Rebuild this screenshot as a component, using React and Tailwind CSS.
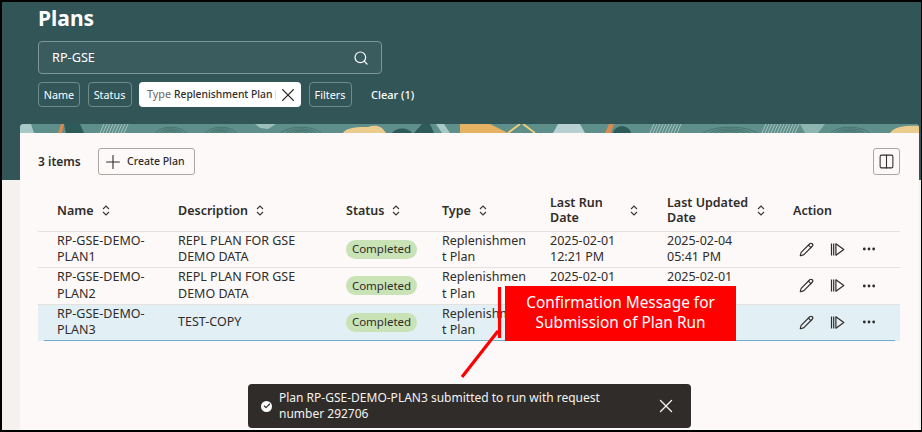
import { Search, X, Plus, Columns2, Pencil, Ellipsis, Check } from 'lucide-react';

const plans = [
  { name: ['RP-GSE-DEMO-', 'PLAN1'], desc: ['REPL PLAN FOR GSE', 'DEMO DATA'], run: ['2025-02-01', '12:21 PM'], updated: ['2025-02-04', '05:41 PM'] },
  { name: ['RP-GSE-DEMO-', 'PLAN2'], desc: ['REPL PLAN FOR GSE', 'DEMO DATA'], run: ['2025-02-01', '12:21 PM'], updated: ['2025-02-01', '12:21 PM'] },
  { name: ['RP-GSE-DEMO-', 'PLAN3'], desc: ['TEST-COPY'], run: ['2025-02-01', '12:21 PM'], updated: ['2025-02-01', '12:21 PM'], selected: true },
];

function SortIcon() {
  return (
    <svg width="8" height="11" viewBox="0 0 8 11" fill="none" stroke="#3a3632" strokeWidth="1.1" className="shrink-0">
      <path d="M1 4 4 1l3 3M1 7l3 3 3-3" />
    </svg>
  );
}

function RunIcon() {
  return (
    <svg width="15" height="15" viewBox="0 0 15 15" fill="none" stroke="#2f2c2a" strokeWidth="1.2">
      <path d="M1.5 1.5v12M3.7 1.5v12M5.9 1.5v12" />
      <path d="M5.9 1.7 13.8 7.5 5.9 13.3" strokeLinejoin="round" />
    </svg>
  );
}

function Arcs({ x, w }) {
  const cx = x + w / 2;
  return (
    <g fill="none" stroke="#2f5553" strokeWidth="0.6" opacity="0.8">
      <path d={`M${cx - w / 2} 10C${cx - w / 3} 1 ${cx + w / 3} 1 ${cx + w / 2} 10`} />
      <path d={`M${cx - w / 2.6} 10C${cx - w / 4} 3 ${cx + w / 4} 3 ${cx + w / 2.6} 10`} />
      <path d={`M${cx - w / 3.4} 10C${cx - w / 5} 5 ${cx + w / 5} 5 ${cx + w / 3.4} 10`} />
      <path d={`M${cx - w / 5} 10C${cx - w / 8} 7 ${cx + w / 8} 7 ${cx + w / 5} 10`} />
    </g>
  );
}

function Hatch({ x, w }) {
  const marks = [];
  for (let i = 0; i < w; i += 3) marks.push(`M${x + i} 9 ${x + i + 4} 0`);
  return <path d={marks.join('')} stroke="#cfe0dc" strokeWidth="0.8" fill="none" opacity="0.8" />;
}

function Banner() {
  return (
    <svg className="block w-full h-[9px]" viewBox="0 0 899 9" preserveAspectRatio="none">
      <rect width="899" height="9" fill="#5f8f8a" />
      <path d="M0 9 0 0H11L14 9Z" fill="#a9c9c6" />
      <path d="M38 9 41 0H44L42 9Z" fill="#d98b4f" />
      <path d="M44 0H60L64 9H46Z" fill="#2f5a5a" />
      <Hatch x={80} w={26} />
      <Arcs x={135} w={32} />
      <Arcs x={185} w={32} />
      <path d="M235 0H256L248 5 240 4Z" fill="#9dbfbb" />
      <Arcs x={260} w={42} />
      <path d="M323 9C326 3 340 3 348 3 356 0 362 2 366 9Z" fill="#eccb8f" />
      <path d="M372 9C376 3 388 3 392 9ZM394 9 402 0H410L414 9Z" fill="#2f5a5a" />
      <path d="M416 0H424L430 9H422Z" fill="#a9c9c6" />
      <path d="M440 0H470L488 9H440Z" fill="#e4b262" />
      <path d="M488 9 500 0M503 0 515 9" stroke="#f2cf7a" strokeWidth="1.8" fill="none" />
      <path d="M533 9 538 0H560L565 9Z" fill="#b9d0d2" />
      <path d="M585 9 589 0H594L591 9Z" fill="#d98b4f" />
      <path d="M593 9C595 0 609 0 611 9Z" fill="#2f5a5a" />
      <Hatch x={630} w={28} />
      <Arcs x={682} w={56} />
      <Hatch x={742} w={36} />
      <path d="M780 0H805L798 9H785Z" fill="#8fb5b0" />
      <Arcs x={810} w={40} />
      <path d="M870 9C874 3 884 1 899 2V9Z" fill="#eccb8f" />
    </svg>
  );
}

function Th({ children, first }) {
  return (
    <th className={`font-semibold text-left align-middle leading-[15px] ${first ? 'pl-[19px]' : ''}`}>
      <div className="flex items-center gap-[8px]">
        <span>{children}</span>
        <SortIcon />
      </div>
    </th>
  );
}

function Lines({ items }) {
  return items.map((line) => <div key={line}>{line}</div>);
}

function Chip({ children, width }) {
  return (
    <span className={`${width} h-full pt-[1px] flex items-center justify-center rounded-[4px] border border-[#6f8c8d]`}>{children}</span>
  );
}

export default function App() {
  return (
    <div className="relative w-[922px] h-[432px] overflow-hidden border-t-2 border-l-2 border-b-2 border-r border-black bg-[#f4f1ee] font-['Noto_Sans',sans-serif] text-[#2f2c2a] text-[12.5px]">
      <div className="h-[178px] bg-[#325558] pl-[36px]">
        <h1 className="text-[21px] font-bold text-white leading-[32px]">Plans</h1>
        <div className="mt-[7px] flex items-center justify-between w-[344px] h-[33px] px-[13px] rounded-[4px] border border-[#7d9797] bg-[#3a5c5f] text-white text-[12.7px]">
          <span>RP-GSE</span>
          <Search size={16} strokeWidth={1.8} className="mr-[-1px]" />
        </div>
        <div className="mt-[8px] flex items-center gap-[7.5px] h-[25px] text-[10.8px] text-white">
          <Chip width="w-[42px]">Name</Chip>
          <Chip width="w-[44px]">Status</Chip>
          <span className="w-[162px] h-full pl-[8px] flex items-center rounded-[4px] bg-white text-[#2f2c2a] whitespace-nowrap">
            <span className="text-[#6b6662] mr-[3px]">Type</span>
            <span className="font-medium text-[10.3px]">Replenishment Plan</span>
            <span className="ml-auto w-px h-[10px] bg-[#e5e1dd]" />
            <X size={22} strokeWidth={1.2} className="ml-[1px] mr-[2px]" />
          </span>
          <Chip width="w-[43px]">Filters</Chip>
          <span className="ml-[12px] pt-[1px] font-medium text-[11px]">Clear (1)</span>
        </div>
      </div>

      <div className="ml-[18px] mr-[2px] -mt-[56px] h-[310px] rounded-t-[4px] overflow-hidden bg-[#fcf9f8]">
        <Banner />
        <div className="flex items-center h-[27px] mt-[15px] pl-[18px] pr-[19px]">
          <span className="w-[42px] whitespace-nowrap font-semibold text-[12px]">3 items</span>
          <button className="ml-[18px] flex items-center w-[97px] h-full pl-[3px] rounded-[3px] border border-[#aaa6a2] text-[10.5px] font-medium">
            <Plus size={22} strokeWidth={1.2} className="mr-[3px]" />
            Create Plan
          </button>
          <button className="ml-auto flex items-center justify-center w-[27px] h-full rounded-[3px] border border-[#aaa6a2]">
            <Columns2 size={17} strokeWidth={1.5} />
          </button>
        </div>
        <table className="mt-[15px] ml-[18px] w-[862px] table-fixed border-collapse">
          <colgroup>
            <col className="w-[140px]" />
            <col className="w-[168px]" />
            <col className="w-[96px]" />
            <col className="w-[108px]" />
            <col className="w-[117px]" />
            <col className="w-[126px]" />
            <col className="w-[107px]" />
          </colgroup>
          <thead>
            <tr className="h-[41px] border-b border-[#e5e1dd]">
              <Th first>Name</Th>
              <Th>Description</Th>
              <Th>Status</Th>
              <Th>Type</Th>
              <th className="font-semibold text-left leading-[15px]">
                <div className="flex items-center w-[88px] justify-between">
                  <span>Last Run<br />Date</span>
                  <SortIcon />
                </div>
              </th>
              <th className="font-semibold text-left leading-[15px]">
                <div className="flex items-center w-[98px] justify-between">
                  <span>Last Updated<br />Date</span>
                  <SortIcon />
                </div>
              </th>
              <th className="font-semibold text-left leading-[15px]">Action</th>
            </tr>
          </thead>
          <tbody className="leading-[16.5px]">
            {plans.map((p) => (
              <tr key={p.name[1]} className={`h-[36.6px] ${p.selected ? 'bg-[#e2f0f6] border-y border-[#6fb0c8]' : 'border-b border-[#e5e1dd]'}`}>
                <td className="pl-[19px]"><Lines items={p.name} /></td>
                <td><Lines items={p.desc} /></td>
                <td>
                  <span className="inline-flex items-center justify-center w-[71px] h-[19px] rounded-full bg-[#c9e3b7] text-[11.5px]">Completed</span>
                </td>
                <td>
                  <div>Replenishmen</div>
                  <div>t Plan</div>
                </td>
                <td><Lines items={p.run} /></td>
                <td><Lines items={p.updated} /></td>
                <td>
                  <div className="flex items-center pl-[6px] gap-[16px]">
                    <Pencil size={15} strokeWidth={1.8} className="text-[#2f2c2a]" />
                    <RunIcon />
                    <Ellipsis size={16} strokeWidth={2.2} />
                  </div>
                </td>
              </tr>
            ))}
          </tbody>
        </table>
      </div>

      {/* the selected row's lower rule stops short of the row on both sides */}
      <div className="absolute left-[36px] top-[338px] w-[6px] h-[1px] bg-[#e2f0f6]" />
      <div className="absolute left-[893px] top-[338px] w-[5px] h-[1px] bg-[#e2f0f6]" />

      {/* red annotation laid over the table */}
      <svg className="absolute left-[454px] top-[284px]" width="50" height="96" viewBox="0 0 50 96" fill="none" stroke="#ff0000" strokeWidth="3.2">
        <path d="M43.5 1V52" />
        <path d="M42 45 6 91" />
      </svg>
      <div className="absolute left-[503px] top-[284px] w-[231px] h-[55px] pb-[2px] flex items-center justify-center text-center bg-[#ff0000] text-white text-[15.4px] leading-[19.5px]">
        <div>Confirmation Message for<br />Submission of Plan Run</div>
      </div>

      {/* confirmation toast */}
      <div className="absolute left-[246px] top-[382px] w-[443px] h-[44px] flex items-center rounded-[4px] bg-[#2f2c2a] text-[#f5f2ef] text-[12px] leading-[16.5px]">
        <span className="ml-[13px] flex items-center justify-center w-[11px] h-[11px] rounded-full bg-white">
          <Check size={8} strokeWidth={3.5} className="text-[#2f2c2a]" />
        </span>
        <div className="ml-[7px] w-[360px]">Plan RP-GSE-DEMO-PLAN3 submitted to run with request number 292706</div>
        <X size={22} strokeWidth={1.5} className="ml-auto mr-[14px]" />
      </div>
    </div>
  );
}
